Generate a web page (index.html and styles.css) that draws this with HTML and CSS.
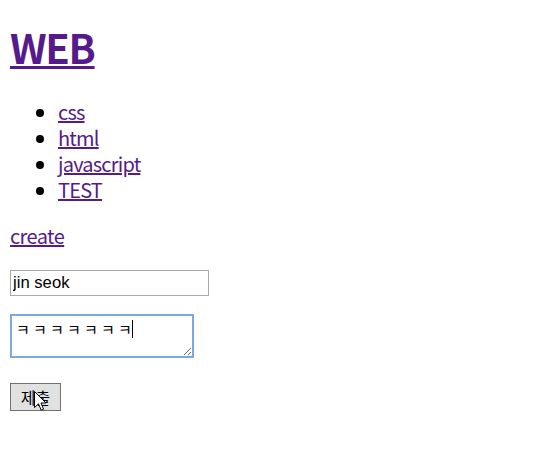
FILE: index.html
```html
<!DOCTYPE html>
<html lang="ko">
<head>
<meta charset="utf-8">
<title>WEB</title>
<link rel="stylesheet" href="styles.css">
</head>
<body>
<div class="page">
  <h1 class="title"><a href="/" class="link">WEB</a></h1>
  <ul class="nav">
    <li><a href="/?id=css" class="link">css</a></li>
    <li><a href="/?id=html" class="link">html</a></li>
    <li><a href="/?id=javascript" class="link">javascript</a></li>
    <li><a href="/?id=TEST" class="link">TEST</a></li>
  </ul>
  <p class="create"><a href="/create" class="link">create</a></p>
  <form class="form" action="/create_process" method="post">
    <div class="row row-title"><input class="field" type="text" name="title" value="jin seok"></div>
    <div class="row row-desc">
      <div class="area-wrap">
        <textarea class="area" name="description">ㅋ ㅋ ㅋ ㅋ ㅋ ㅋ ㅋ</textarea>
        <span class="caret"></span>
      </div>
    </div>
    <div class="row row-submit">
      <div class="btn-wrap">
        <input class="btn" type="submit" value="제출">
        <svg class="cursor" width="13" height="21" viewBox="0 0 13 21"><path d="M0.5 0.5 L0.5 16.5 L4.5 12.8 L7.2 19.2 L9.6 18.2 L7 12 L12 12 Z" fill="#fff" stroke="#000" stroke-width="1" stroke-linejoin="miter"/></svg>
      </div>
    </div>
  </form>
</div>
</body>
</html>
```
FILE: styles.css
```css
html, body {
  margin: 0;
  padding: 0;
  background: #fff;
}
body {
  font-family: "Noto Sans CJK KR", "Open Sans", sans-serif;
  font-size: 20px;
  color: #000;
}
.page {
  padding: 27px 10px 20px;
}
.link {
  color: #551a8b;
  text-decoration: underline;
}
.title {
  margin: 0 0 32px;
  font-size: 40px;
  line-height: 40px;
  font-weight: bold;
  letter-spacing: -1.3px;
}
.title .link {
  text-decoration-thickness: 3px;
  text-underline-offset: 2px;
}
.nav {
  margin: 0 0 20px;
  padding-left: 48px;
  list-style: disc;
}
.nav li {
  line-height: 26px;
  letter-spacing: -0.8px;
}
.create {
  margin: 0;
  line-height: 26px;
  letter-spacing: -0.6px;
}
.form {
  margin: 0;
}
.row {
  display: flex;
}
.row-title {
  margin-top: 21px;
}
.row-desc {
  margin-top: 18px;
}
.row-submit {
  margin-top: 23px;
}
.field {
  box-sizing: border-box;
  width: 199px;
  height: 26px;
  margin: 0;
  padding: 1px 2px;
  border: 1px solid #a9a9a9;
  font-family: "Liberation Sans", Arial, sans-serif;
  font-size: 16.67px;
  color: #000;
}
.area-wrap {
  position: relative;
}
.area {
  display: block;
  box-sizing: border-box;
  width: 184px;
  height: 44px;
  margin: 0;
  padding: 4px 4px;
  border: 2px solid #7fa6ec;
  outline: none;
  font-family: "Noto Sans CJK KR", sans-serif;
  font-size: 15px;
  letter-spacing: -0.5px;
  line-height: 18px;
  color: #000;
  resize: both;
}
.caret {
  position: absolute;
  left: 122px;
  top: 6px;
  width: 1px;
  height: 18px;
  background: #000;
}
.btn-wrap {
  position: relative;
}
.btn {
  box-sizing: border-box;
  width: 51px;
  height: 28px;
  margin: 0;
  padding: 0 6px;
  border: 1px solid #707070;
  border-radius: 0;
  background: #e1e1e1;
  font-family: "Noto Sans CJK KR", sans-serif;
  font-size: 16px;
  color: #000;
}
.cursor {
  position: absolute;
  left: 24px;
  top: 10px;
}
```
